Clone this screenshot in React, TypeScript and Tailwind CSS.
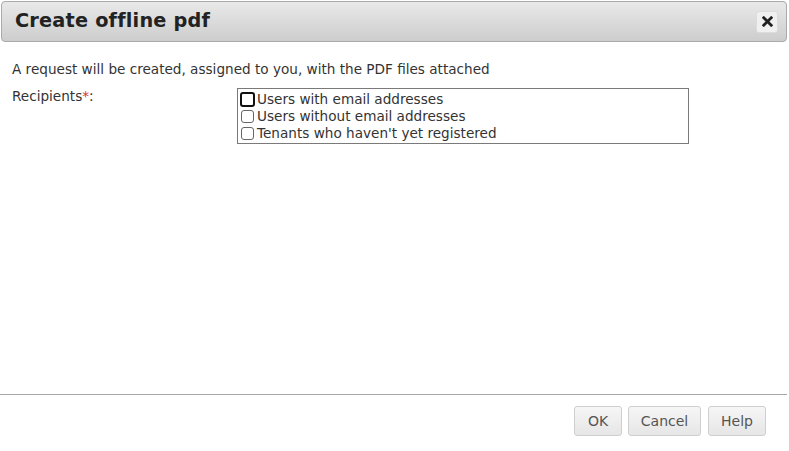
import React from "react";

const options = [
  "Users with email addresses",
  "Users without email addresses",
  "Tenants who haven't yet registered",
];

const App = () => {
  return (
    <div className="w-[789px] h-[451px] bg-white flex flex-col text-[#333]" style={{ fontFamily: "'DejaVu Sans', Verdana, sans-serif" }}>
      <div className="mx-[1px] mt-[1px] w-[786px] h-[41px] flex items-center justify-between rounded-[4px] border border-[#aaaaaa] bg-gradient-to-b from-[#e9e9e9] to-[#cdcdcd] pl-[13px] pr-[8px]">
        <h1 className="text-[19.3px] font-bold text-[#222] tracking-[0.2px]">Create offline pdf</h1>
        <button className="w-[22px] h-[22px] rounded-[3px] bg-[#f0f0f0] border border-[#dcdcdc] flex items-center justify-center">
          <svg width="11" height="11" viewBox="0 0 11 11">
            <path d="M1.8 1.8 L9.2 9.2 M9.2 1.8 L1.8 9.2" stroke="#222" strokeWidth="2.8" strokeLinecap="square" />
          </svg>
        </button>
      </div>

      <div className="flex-1 px-[12px] pt-[19px] text-[13.6px] leading-[17px]">
        <p>A request will be created, assigned to you, with the PDF files attached</p>
        <div className="flex mt-[10px]">
          <div className="w-[225px]">
            Recipients<span className="text-[#e0302a]">*</span>:
          </div>
          <div className="w-[452px] h-[56px] border border-[#7a7a7a] pl-[3px] pt-[2px]">
            {options.map((o, i) => (
              <label key={o} className="flex items-center h-[17px]">
                <span
                  className={
                    i === 0
                      ? "w-[15px] h-[15px] rounded-[3px] border-2 border-[#111] mr-[2px] -ml-[1px]"
                      : "w-[13px] h-[13px] rounded-[3px] border border-[#666] mr-[3px]"
                  }
                />
                {o}
              </label>
            ))}
          </div>
        </div>
      </div>

      <div className="w-[787px] border-t border-[#a8a8a8] h-[57px] flex justify-end items-start pt-[11px] pr-[21px] gap-[6px] text-[14px]">
        <button className="w-[48px] h-[30px] rounded-[3px] border border-[#cfcfcf] bg-gradient-to-b from-[#f6f6f6] to-[#e6e6e6] text-[#555]">OK</button>
        <button className="w-[73px] h-[30px] rounded-[3px] border border-[#cfcfcf] bg-gradient-to-b from-[#f6f6f6] to-[#e6e6e6] text-[#555]">Cancel</button>
        <button className="w-[58px] h-[30px] rounded-[3px] border border-[#cfcfcf] bg-gradient-to-b from-[#f6f6f6] to-[#e6e6e6] text-[#555] ml-[1px]">Help</button>
      </div>
    </div>
  );
};

export default App;
